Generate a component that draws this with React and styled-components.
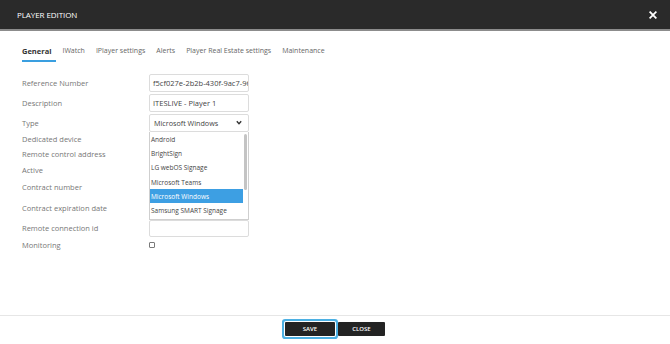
import React from 'react';
import styled, { createGlobalStyle } from 'styled-components';

const GlobalStyle = createGlobalStyle`
	html, body {
		margin: 0;
		padding: 0;
		background: #ffffff;
		font-family: 'Open Sans', 'Liberation Sans', sans-serif;
	}
	* {
		box-sizing: border-box;
	}
`;

const Modal = styled.div`
	width: 670px;
	height: 344px;
	display: flex;
	flex-direction: column;
	background: #ffffff;
	overflow: hidden;
`;

const Header = styled.div`
	height: 31px;
	flex-shrink: 0;
	display: flex;
	align-items: center;
	justify-content: space-between;
	padding: 0 13px 0 17px;
	background: #2a2a2a;
	border-bottom: 2px solid #8c8c8c;
`;

const Title = styled.div`
	font-size: 8px;
	font-weight: 400;
	color: #ffffff;
	letter-spacing: -0.01em;
`;

const CloseIcon = styled.svg`
	width: 8px;
	height: 8px;
	display: block;
`;

const Body = styled.div`
	flex: 1;
	padding: 0 22px;
`;

const TabBar = styled.div`
	display: flex;
	margin-top: 13px;
`;

const Tab = styled.div`
	font-size: ${(p) => (p.$active ? 7.5 : 7)}px;
	line-height: 14px;
	font-weight: ${(p) => (p.$active ? 700 : 400)};
	color: ${(p) => (p.$active ? '#333333' : '#666666')};
	padding: 0 ${(p) => (p.$active ? 5 : 0)}px 2px 0;
	margin-right: ${(p) => (p.$active ? 6 : 11)}px;
	border-bottom: 2px solid ${(p) => (p.$active ? '#3a9fe0' : 'transparent')};
	white-space: nowrap;
`;

const Form = styled.div`
	margin-top: 11px;
	display: flex;
	flex-direction: column;
`;

const Row = styled.div`
	position: relative;
	display: grid;
	grid-template-columns: 127px 100px;
	align-items: center;
	height: ${(p) => p.$h}px;
`;

const Label = styled.div`
	font-size: 7.5px;
	color: #777777;
	white-space: nowrap;
`;

const TextInput = styled.div`
	height: ${(p) => p.$h || 18}px;
	border: 1px solid #dcdcdc;
	border-radius: 2px;
	padding: 0 3px;
	display: flex;
	align-items: center;
	font-size: 7.5px;
	color: #444444;
	white-space: nowrap;
	overflow: hidden;
	background: #ffffff;
`;

const SelectBox = styled(TextInput)`
	justify-content: space-between;
	padding: 0 6px 0 4px;
	font-size: 7.2px;
`;

const Chevron = styled.svg`
	width: 6px;
	height: 5px;
	display: block;
`;

const DropList = styled.div`
	position: absolute;
	top: 100%;
	left: 127px;
	width: 100px;
	height: 88px;
	background: #ffffff;
	border: 1px solid #cfcfcf;
	border-top: none;
	padding-right: 5px;
	z-index: 5;
`;

const Option = styled.div`
	height: 14.3px;
	display: flex;
	align-items: center;
	padding-left: 1px;
	font-size: 6.5px;
	color: ${(p) => (p.$selected ? '#ffffff' : '#444444')};
	background: ${(p) => (p.$selected ? '#3d9fe3' : 'transparent')};
	white-space: nowrap;
`;

const ScrollThumb = styled.div`
	position: absolute;
	top: 2px;
	right: 1px;
	width: 3px;
	height: 56px;
	border-radius: 2px;
	background: #c4c4c4;
`;

const Checkbox = styled.div`
	width: 6px;
	height: 6px;
	border: 1px solid #7a7a7a;
	border-radius: 1px;
`;

const Footer = styled.div`
	height: 29px;
	flex-shrink: 0;
	display: flex;
	justify-content: center;
	align-items: center;
	gap: 3px;
	border-top: 1px solid #e6e6e6;
	padding-bottom: 2px;
`;

const Button = styled.div`
	width: ${(p) => p.$w}px;
	height: 14px;
	display: flex;
	align-items: center;
	justify-content: center;
	background: #232323;
	color: #ffffff;
	font-size: 6px;
	font-weight: 600;
	border-radius: 1px;
	box-shadow: ${(p) => (p.$focus ? '0 0 0 1px #ffffff, 0 0 0 3px #4cb0e3' : 'none')};
`;

const tabs = ['General', 'IWatch', 'IPlayer settings', 'Alerts', 'Player Real Estate settings', 'Maintenance'];

const options = ['Android', 'BrightSign', 'LG webOS Signage', 'Microsoft Teams', 'Microsoft Windows', 'Samsung SMART Signage'];

const App = () => {
	return (
		<Modal>
			<GlobalStyle />
			<Header>
				<Title>PLAYER EDITION</Title>
				<CloseIcon viewBox="0 0 10 10">
					<path d="M1.5 1.5 L8.5 8.5 M8.5 1.5 L1.5 8.5" stroke="#ffffff" strokeWidth="2.2" strokeLinecap="square" />
				</CloseIcon>
			</Header>
			<Body>
				<TabBar>
					{tabs.map((t, i) => (
						<Tab key={t} $active={i === 0}>{t}</Tab>
					))}
				</TabBar>
				<Form>
					<Row $h={20}>
						<Label>Reference Number</Label>
						<TextInput>f5cf027e-2b2b-430f-9ac7-96f</TextInput>
					</Row>
					<Row $h={20}>
						<Label>Description</Label>
						<TextInput>ITESLIVE - Player 1</TextInput>
					</Row>
					<Row $h={19}>
						<Label>Type</Label>
						<SelectBox>
							<span>Microsoft Windows</span>
							<Chevron viewBox="0 0 6 5">
								<path d="M0.8 1.2 L3 3.6 L5.2 1.2" fill="none" stroke="#333333" strokeWidth="1.4" />
							</Chevron>
						</SelectBox>
						<DropList>
							{options.map((o) => (
								<Option key={o} $selected={o === 'Microsoft Windows'}>{o}</Option>
							))}
							<ScrollThumb />
						</DropList>
					</Row>
					<Row $h={14}>
						<Label>Dedicated device</Label>
						<Checkbox />
					</Row>
					<Row $h={16}>
						<Label>Remote control address</Label>
					</Row>
					<Row $h={15}>
						<Label>Active</Label>
						<Checkbox />
					</Row>
					<Row $h={20}>
						<Label>Contract number</Label>
						<TextInput />
					</Row>
					<Row $h={21}>
						<Label>Contract expiration date</Label>
						<TextInput />
					</Row>
					<Row $h={20}>
						<Label>Remote connection id</Label>
						<TextInput $h={17} />
					</Row>
					<Row $h={14}>
						<Label>Monitoring</Label>
						<Checkbox />
					</Row>
				</Form>
			</Body>
			<Footer>
				<Button $w={50} $focus>SAVE</Button>
				<Button $w={47}>CLOSE</Button>
			</Footer>
		</Modal>
	);
};

export default App;
